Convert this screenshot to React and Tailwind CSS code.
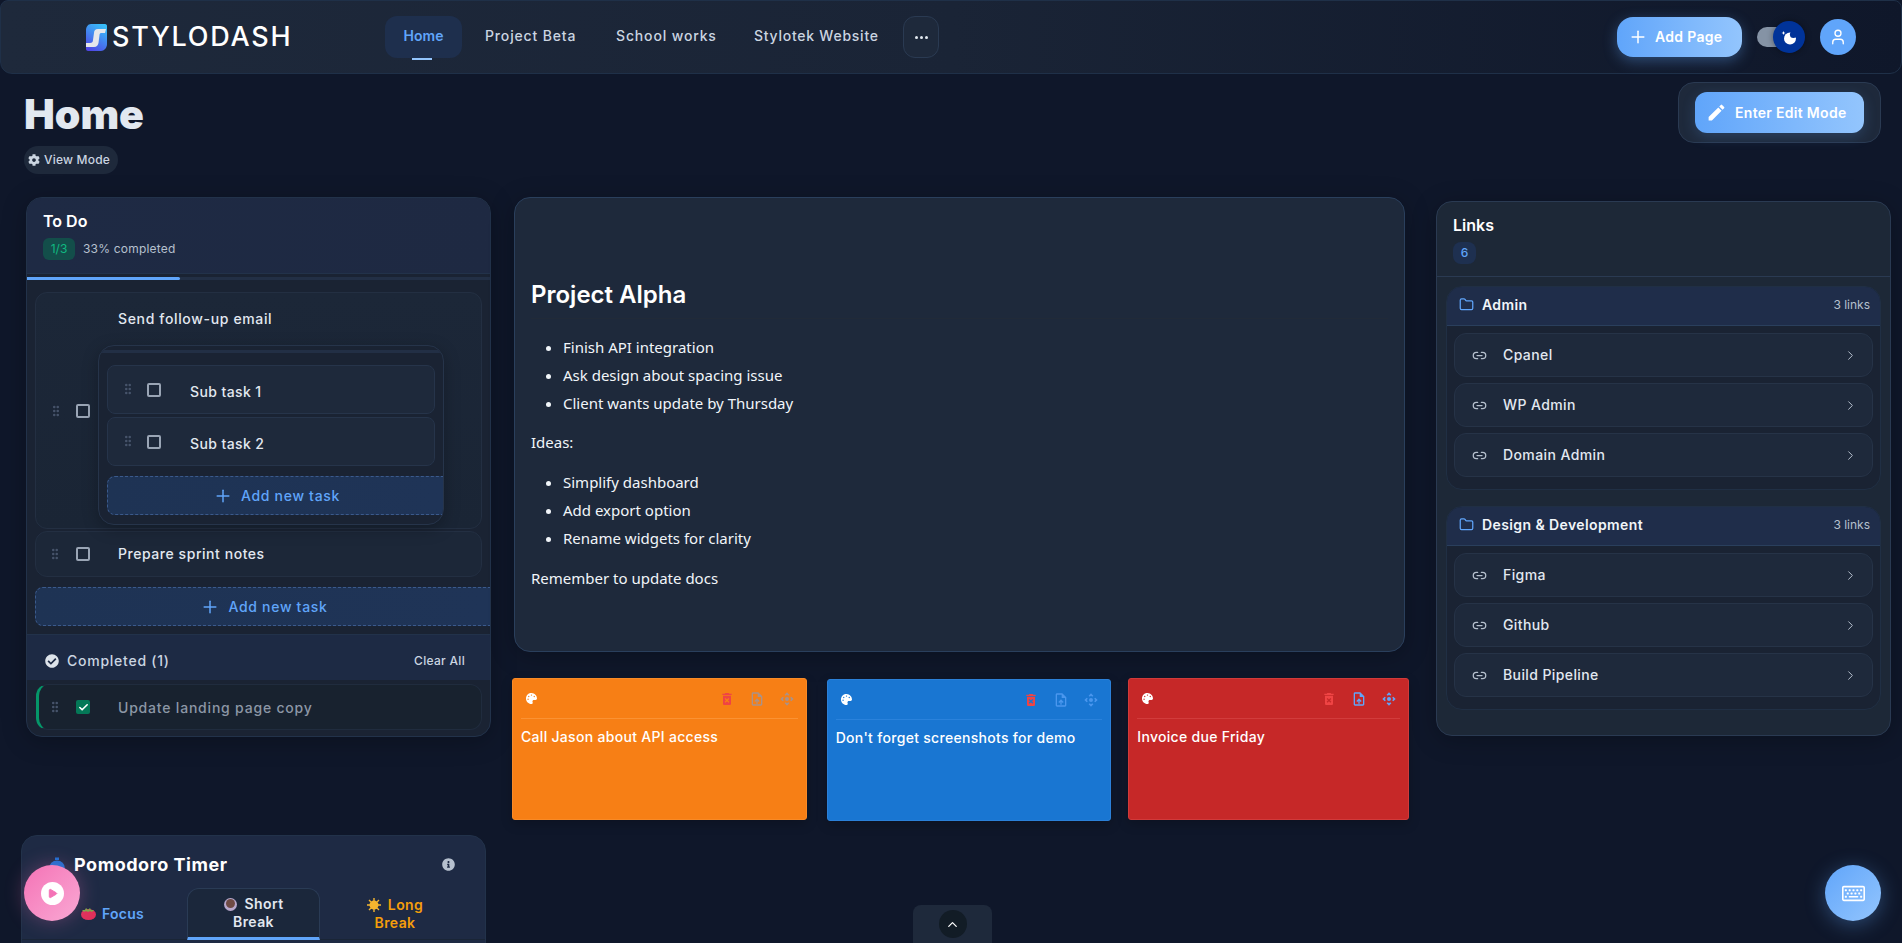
import React from 'react';
import { Plus, User, Folder, Link2, ChevronRight, ChevronUp, GripVertical, Check, Play } from 'lucide-react';
import { MdEdit, MdDeleteForever, MdUploadFile, MdControlCamera } from 'react-icons/md';
import { FaCog, FaCheckCircle, FaInfoCircle, FaPalette, FaRegKeyboard } from 'react-icons/fa';

const linkGroups = [
  { name: 'Admin', links: ['Cpanel', 'WP Admin', 'Domain Admin'] },
  { name: 'Design & Development', links: ['Figma', 'Github', 'Build Pipeline'] },
];

const notes = [
  { text: 'Call Jason about API access', box: 'w-[295px] bg-[#f77f15] border-[#f98a26]', line: 'border-[#fb9233]', ghost: 'opacity-50' },
  { text: "Don't forget screenshots for demo", box: 'w-[285px] ml-[20px] mt-[1px] bg-[#1976d2] border-[#2b80d8]', line: 'border-[#2a82dc]', ghost: 'opacity-70' },
  { text: 'Invoice due Friday', box: 'w-[281px] ml-[17px] bg-[#c62828] border-[#d13a3a]', line: 'border-[#d23c3c]', ghost: 'opacity-100' },
];

const Grip = ({ className = '' }) => (
  <GripVertical className={`w-[14px] h-[14px] text-[#46536a] ${className}`} strokeWidth={2.4} />
);

const Box = () => <span className="block w-[14px] h-[14px] rounded-[2px] border-2 border-[#9aa5b5]" />;

const AddTask = ({ className }) => (
  <div className={`flex items-center justify-center gap-[8px] h-[39px] pl-[2px] rounded-l-lg border border-r-0 border-dashed border-[#3b5a8c] bg-gradient-to-r from-[#1e3354] to-[#1f3457] text-[#60a5fa] text-[14px] font-medium tracking-[0.7px] ${className}`}>
    <Plus className="w-[20px] h-[20px]" strokeWidth={1.8} />
    Add new task
  </div>
);

const SubTask = ({ label }) => (
  <div className="flex h-[49px] rounded-lg border border-[#26344a] bg-[#1e293b]">
    <Grip className="ml-[13px] mt-[16px]" />
    <div className="ml-[12px] mt-[17px]"><Box /></div>
    <span className="ml-[29px] mt-[15px] text-[14px] font-medium tracking-[0.4px] text-[#e2e8f0]">{label}</span>
  </div>
);

const Header = () => (
  <header className="flex items-center h-[74px] border border-[#1f3048] rounded-b-xl rounded-t-lg bg-gradient-to-r from-[#1e293b] via-[#1a2436] to-[#0f172a]">
    <div className="flex items-center ml-[85px] w-[299px]">
      <svg width="21" height="27" viewBox="0 0 21 27">
        <defs>
          <linearGradient id="logoFill" x1="0.7" y1="0" x2="0.2" y2="1">
            <stop offset="0" stopColor="#38bdf8" />
            <stop offset="1" stopColor="#4f46e5" />
          </linearGradient>
        </defs>
        <path d="M5 0H19C20.5 0 21 1 21 2V20C21 24 18 27 15 27H2C1 27 0 26 0 25V6C0 3 2 0 5 0Z" fill="url(#logoFill)" />
        <path d="M20 5H12C9 5 8 7 8 9L7 16C7 18 6 19 4 19H0V23H8C11 23 12 21 12.5 19L13.5 11C13.7 9.5 14 9 16 9H19Z" fill="#e5e7eb" />
      </svg>
      <span className="ml-[5px] mb-[1px] text-[27px] leading-none font-medium tracking-[1.75px] text-white">STYLODASH</span>
    </div>
    <nav className="flex items-center">
      <a className="relative flex items-center justify-center w-[77px] h-[42px] pb-[3px] rounded-xl bg-[#1e2f4d] text-[14px] font-semibold text-[#60a5fa]">
        Home
        <span className="absolute bottom-[-2px] left-[27px] w-[20px] h-[2px] bg-[#93c5fd]" />
      </a>
      <a className="ml-[23px] mb-[3px] w-[90px] text-[14px] font-medium tracking-[0.85px] whitespace-nowrap text-[#cbd5e1]">Project Beta</a>
      <a className="ml-[41px] mb-[3px] w-[98px] text-[14px] font-medium tracking-[0.85px] whitespace-nowrap text-[#cbd5e1]">School works</a>
      <a className="ml-[40px] mb-[3px] w-[125px] text-[14px] font-medium tracking-[0.75px] whitespace-nowrap text-[#cbd5e1]">Stylotek Website</a>
      <button className="flex items-center justify-center ml-[24px] w-[36px] h-[42px] rounded-xl border border-[#2a3a52] bg-[#1e293b]">
        <span className="flex gap-[2px]">
          <i className="w-[3px] h-[3px] rounded-full bg-[#e2e8f0]" />
          <i className="w-[3px] h-[3px] rounded-full bg-[#e2e8f0]" />
          <i className="w-[3px] h-[3px] rounded-full bg-[#e2e8f0]" />
        </span>
      </button>
    </nav>
    <div className="flex items-center ml-auto mr-[45px]">
      <button className="flex items-center gap-[7px] pl-[11px] pb-[1px] w-[125px] h-[40px] rounded-2xl bg-gradient-to-r from-[#60a5fa] to-[#93c5fd] text-[14px] font-semibold tracking-[0.3px] text-white shadow-[0_4px_14px_rgba(96,165,250,0.35)]">
        <Plus className="w-[20px] h-[20px]" strokeWidth={1.8} />
        Add Page
      </button>
      <div className="relative ml-[15px] w-[48px] h-[32px]">
        <span className="absolute left-0 top-[6px] w-[34px] h-[20px] rounded-full bg-[#8593a5]" />
        <span className="absolute right-0 top-0 flex items-center justify-center w-[32px] h-[32px] rounded-full bg-[#003399] shadow-[0_0_6px_rgba(0,0,0,0.4)]">
          <svg width="16" height="15" viewBox="0 0 16 15">
            <circle cx="9" cy="8.5" r="6" fill="#fff" />
            <circle cx="12.5" cy="4.5" r="3.6" fill="#003399" />
            <path d="M2.5 1l.6 1.4L4.5 3l-1.4.6L2.5 5l-.6-1.4L.5 3l1.4-.6z" fill="#fff" />
          </svg>
        </span>
      </div>
      <span className="flex items-center justify-center ml-[15px] w-[36px] h-[36px] rounded-full bg-[#60a5fa] text-white">
        <User className="w-[18px] h-[18px]" strokeWidth={1.8} />
      </span>
    </div>
  </header>
);

const TodoCard = () => (
  <section className="ml-[5px] w-[465px] h-[540px] overflow-hidden rounded-2xl border border-[#22324a] bg-[#1a2333] shadow-[0_4px_24px_rgba(0,0,0,0.25)]">
    <div className="h-[76px] pl-[16px] pt-[13px] border-b border-[#22324a] bg-gradient-to-r from-[#1e2a44] to-[#1e2942]">
      <h2 className="text-[16px] leading-[20px] font-semibold text-white">To Do</h2>
      <div className="flex items-center mt-[7px]">
        <span className="flex items-center justify-center w-[32px] h-[22px] rounded-md bg-[#134e4a] text-[12px] text-[#10b981]">1/3</span>
        <span className="ml-[8px] text-[12px] tracking-[0.2px] text-[#b6c0ce]">33% completed</span>
      </div>
    </div>
    <div className="h-[3px] mt-[3px] bg-[#222f45]">
      <div className="w-[33%] h-full rounded-r-sm bg-[#60a5fa]" />
    </div>
    <div className="pt-[12px] pl-[8px]">
      <div className="relative w-[447px] h-[237px] rounded-xl border border-[#232f42] bg-gradient-to-b from-[#1c2738] to-[#1a2535]">
        <div className="absolute left-[13px] top-[111px]"><Grip /></div>
        <div className="absolute left-[40px] top-[111px]"><Box /></div>
        <span className="absolute left-[82px] top-[15px] text-[14px] font-medium tracking-[0.65px] text-[#e2e8f0]">Send follow-up email</span>
        <div className="absolute left-[62px] top-[52px] w-[346px] h-[180px] overflow-hidden rounded-2xl border border-[#26344a] bg-[#1a2333] shadow-[0_4px_16px_rgba(0,0,0,0.25)]">
          <div className="h-[3px] mt-[4px] bg-[#222f45]" />
          <div className="flex flex-col gap-[3px] pl-[8px] pr-[8px] pt-[12px]">
            <SubTask label="Sub task 1" />
            <SubTask label="Sub task 2" />
          </div>
          <AddTask className="ml-[8px] mt-[10px]" />
        </div>
      </div>
      <div className="flex items-center w-[447px] h-[46px] mt-[2px] rounded-xl border border-[#232f42] bg-[#1c2738]">
        <Grip className="ml-[12px]" />
        <div className="ml-[14px]"><Box /></div>
        <span className="ml-[28px] mb-[1px] text-[14px] font-medium tracking-[0.55px] text-[#e2e8f0]">Prepare sprint notes</span>
      </div>
      <AddTask className="mt-[10px]" />
    </div>
    <div className="flex items-center justify-between h-[46px] mt-[8px] pt-[6px] pl-[18px] pr-[25px] border-t border-[#22324a] bg-[#1d2a44]">
      <span className="flex items-center gap-[8px] text-[14px] font-medium tracking-[0.75px] text-[#cbd5e1]">
        <FaCheckCircle className="w-[14px] h-[14px] text-[#dde3ea]" />
        Completed (1)
      </span>
      <span className="text-[12px] font-medium tracking-[0.3px] text-[#cbd5e1]">Clear All</span>
    </div>
    <div className="flex items-center w-[446px] h-[46px] ml-[9px] mt-[4px] rounded-xl border border-[#202c3e] border-l-[3px] border-l-[#059669] bg-[#18222f]">
      <Grip className="ml-[9px]" />
      <span className="flex items-center justify-center ml-[14px] w-[14px] h-[14px] rounded-[2px] bg-[#047857] text-white">
        <Check className="w-[11px] h-[11px]" strokeWidth={3.5} />
      </span>
      <span className="ml-[28px] text-[14px] font-medium tracking-[0.8px] text-[#8c97a6]">Update landing page copy</span>
    </div>
  </section>
);

const PomodoroCard = () => (
  <section className="mt-[98px] w-[465px] h-[140px] rounded-t-2xl border border-[#22324a] bg-[#1e2a44]">
    <div className="relative flex items-center justify-between h-[52px] pt-[4px] pl-[52px] pr-[30px]">
      <svg className="absolute left-[26px] top-[21px]" width="18" height="20" viewBox="0 0 18 20">
        <circle cx="9" cy="11.5" r="8" fill="#1a6fd1" />
        <rect x="7" y="0.5" width="4" height="2.5" fill="#1a6fd1" />
      </svg>
      <h2 className="text-[18px] font-bold tracking-[0.55px] text-white">Pomodoro Timer</h2>
      <FaInfoCircle className="w-[13px] h-[13px] text-[#b6c0ce]" />
    </div>
    <div className="flex h-[52px] border-b border-[#1a2536]">
      <div className="flex items-center justify-center w-[165px] pl-[16px] gap-[6px] text-[14px] font-semibold tracking-[0.3px] text-[#60a5fa]">
        <svg width="15" height="13" viewBox="0 0 15 13">
          <ellipse cx="7.5" cy="7.5" rx="7.5" ry="5.5" fill="#e0315b" />
          <path d="M1 3l3 0 1-2 2 2 2-2 1 2 3 0-2 2-2-1-2 1-2-1-2 1z" fill="#7fa84a" />
        </svg>
        Focus
      </div>
      <div className="flex flex-col items-center justify-center w-[133px] h-[52px] rounded-t-xl border border-b-[3px] border-[#2a3b55] border-b-[#60a5fa] bg-[#1b273b] text-center text-[14px] leading-[18px] font-semibold tracking-[0.4px] text-[#e2e8f0]">
        <span className="flex items-center gap-[7px]">
          <svg width="14" height="13" viewBox="0 0 14 13">
            <circle cx="6.5" cy="6.5" r="6.5" fill="#b8a8cc" />
            <circle cx="6.5" cy="5.5" r="4.5" fill="#6f4b45" />
          </svg>
          Short
        </span>
        Break
      </div>
      <div className="flex flex-col items-center justify-center w-[150px] text-[14px] leading-[18px] font-semibold tracking-[0.4px] text-[#f59e0b]">
        <span className="flex items-center gap-[7px]">
          <svg width="14" height="14" viewBox="0 0 14 14">
            <circle cx="7" cy="7" r="4.5" fill="#f4b62f" />
            <path d="M7 0v3M7 11v3M0 7h3M11 7h3M2 2l2 2M10 10l2 2M12 2l-2 2M4 10l-2 2" stroke="#f4b62f" strokeWidth="1.4" />
          </svg>
          Long
        </span>
        Break
      </div>
    </div>
  </section>
);

const ProjectNote = () => (
  <section className="h-[455px] rounded-2xl border border-[#2a3f5c] bg-[#1e293b] shadow-[0_4px_24px_rgba(0,0,0,0.25)] px-[16px] pt-[81px] font-['Noto_Sans',sans-serif] text-[15px] text-[#f1f5f9]">
    <h2 className="pb-[7px] border-b border-[#212a38] font-['Inter',sans-serif] text-[24px] leading-[32px] font-semibold text-white">Project Alpha</h2>
    <ul className="mt-[18px] pl-[32px] list-disc leading-[20px] space-y-[8px]">
      <li>Finish API integration</li>
      <li>Ask design about spacing issue</li>
      <li>Client wants update by Thursday</li>
    </ul>
    <p className="mt-[19px] leading-[20px]">Ideas:</p>
    <ul className="mt-[20px] pl-[32px] list-disc leading-[20px] space-y-[8px]">
      <li>Simplify dashboard</li>
      <li>Add export option</li>
      <li>Rename widgets for clarity</li>
    </ul>
    <p className="mt-[20px] leading-[20px]">Remember to update docs</p>
  </section>
);

const StickyNote = ({ note }) => (
  <article className={`h-[142px] rounded-[3px] border px-[8px] shadow-[0_4px_12px_rgba(0,0,0,0.2)] ${note.box}`}>
    <div className={`flex items-center h-[40px] pl-[5px] pr-[3px] border-b ${note.line}`}>
      <FaPalette className="w-[11px] h-[11px] text-white" />
      <span className="ml-auto flex items-center gap-[14px]">
        <MdDeleteForever className="w-[16px] h-[16px] text-[#ef4444]" />
        <MdUploadFile className={`w-[16px] h-[16px] text-[#60a5fa] ${note.ghost}`} />
        <MdControlCamera className={`w-[16px] h-[16px] text-[#60a5fa] ${note.ghost}`} />
      </span>
    </div>
    <p className="mt-[7px] text-[14px] font-medium tracking-[0.3px] text-white">{note.text}</p>
  </article>
);

const LinksCard = () => (
  <section className="w-[455px] h-[535px] rounded-2xl border border-[#2a3a52] bg-[#1d2837] shadow-[0_4px_24px_rgba(0,0,0,0.25)]">
    <div className="h-[75px] pl-[16px] pt-[13px] border-b border-[#2a3a52]">
      <h2 className="text-[16px] leading-[20px] font-semibold text-white">Links</h2>
      <span className="flex items-center justify-center mt-[7px] w-[23px] h-[22px] rounded-lg bg-[#1e3050] text-[12px] font-medium text-[#60a5fa]">6</span>
    </div>
    <div className="flex flex-col gap-[16px] px-[9px] pt-[9px]">
      {linkGroups.map((group) => (
        <div key={group.name} className="h-[204px] overflow-hidden rounded-2xl border border-[#202f44] bg-[#1a2333]">
          <div className="flex items-center justify-between h-[39px] pb-[3px] pl-[12px] pr-[10px] border-b border-[#2a3f5c] bg-[#1f2d4a]">
            <span className="flex items-center gap-[8px] text-[14px] font-semibold tracking-[0.4px] text-[#f1f5f9]">
              <Folder className="w-[15px] h-[15px] text-[#60a5fa]" />
              {group.name}
            </span>
            <span className="text-[12px] text-[#b6c0ce]">3 links</span>
          </div>
          <div className="flex flex-col gap-[6px] px-[7px] pt-[7px]">
            {group.links.map((link) => (
              <div key={link} className="flex items-center h-[44px] pl-[17px] pr-[14px] rounded-xl border border-[#263347] bg-[#1e293b]">
                <Link2 className="w-[15px] h-[15px] text-[#b6c0ce]" />
                <span className="ml-[16px] mb-[2px] text-[14px] font-medium tracking-[0.4px] text-[#e2e8f0]">{link}</span>
                <ChevronRight className="ml-auto w-[15px] h-[15px] text-[#b6c0ce]" strokeWidth={1.6} />
              </div>
            ))}
          </div>
        </div>
      ))}
    </div>
  </section>
);

export default function App() {
  return (
    <div className="relative h-[943px] overflow-hidden bg-[#0f172a] font-['Inter',sans-serif]">
      <Header />

      <div className="flex justify-between items-start h-[123px] pl-[24px] pr-[21px]">
        <div>
          <h1 className="mt-[16px] text-[41px] leading-[48px] font-black text-[#e2e8f0]">Home</h1>
          <span className="inline-flex items-center gap-[4px] mt-[8px] h-[28px] pl-[4px] pr-[8px] rounded-full bg-[#1e293b] text-[12px] font-medium tracking-[0.2px] text-[#cbd5e1]">
            <FaCog className="w-[12px] h-[12px]" />
            View Mode
          </span>
        </div>
        <div className="mt-[8px] p-[9px] pl-[16px] pr-[16px] rounded-2xl border border-[#2a3a52] bg-[#1e293b]">
          <button className="flex items-center gap-[8px] w-[169px] h-[41px] pl-[11px] pb-[1px] rounded-xl bg-gradient-to-r from-[#60a5fa] to-[#93c5fd] text-[14px] font-semibold tracking-[0.3px] text-white shadow-[0_4px_14px_rgba(96,165,250,0.2)]">
            <MdEdit className="w-[21px] h-[21px]" />
            Enter Edit Mode
          </button>
        </div>
      </div>

      <main className="flex items-start pl-[21px]">
        <div className="w-[470px]">
          <TodoCard />
          <PomodoroCard />
        </div>
        <div className="ml-[21px] w-[897px]">
          <div className="ml-[2px] w-[891px]"><ProjectNote /></div>
          <div className="flex items-start mt-[26px]">
            {notes.map((note) => <StickyNote key={note.text} note={note} />)}
          </div>
        </div>
        <div className="ml-[27px] mt-[4px]"><LinksCard /></div>
      </main>

      <button className="absolute left-[24px] top-[865px] flex items-center justify-center w-[56px] h-[56px] rounded-full bg-gradient-to-br from-[#f472b6] to-[#f9a8d4] shadow-[0_0_20px_rgba(244,114,182,0.3)]">
        <span className="flex items-center justify-center w-[23px] h-[23px] rounded-full bg-white">
          <Play className="w-[11px] h-[11px] ml-[1px] text-[#f472b6] fill-[#f472b6]" />
        </span>
      </button>

      <button className="absolute left-[1825px] top-[865px] flex items-center justify-center w-[56px] h-[56px] rounded-full bg-gradient-to-br from-[#60a5fa] to-[#93c5fd] text-white shadow-[0_4px_20px_rgba(96,165,250,0.35)]">
        <FaRegKeyboard className="w-[23px] h-[23px]" />
      </button>

      <div className="absolute left-[913px] top-[905px] flex justify-center w-[79px] h-[38px] pt-[5px] rounded-t-lg bg-[#1e293b]">
        <span className="flex items-center justify-center w-[28px] h-[28px] rounded-full bg-[#121c26] text-white">
          <ChevronUp className="w-[15px] h-[15px]" />
        </span>
      </div>
    </div>
  );
}
